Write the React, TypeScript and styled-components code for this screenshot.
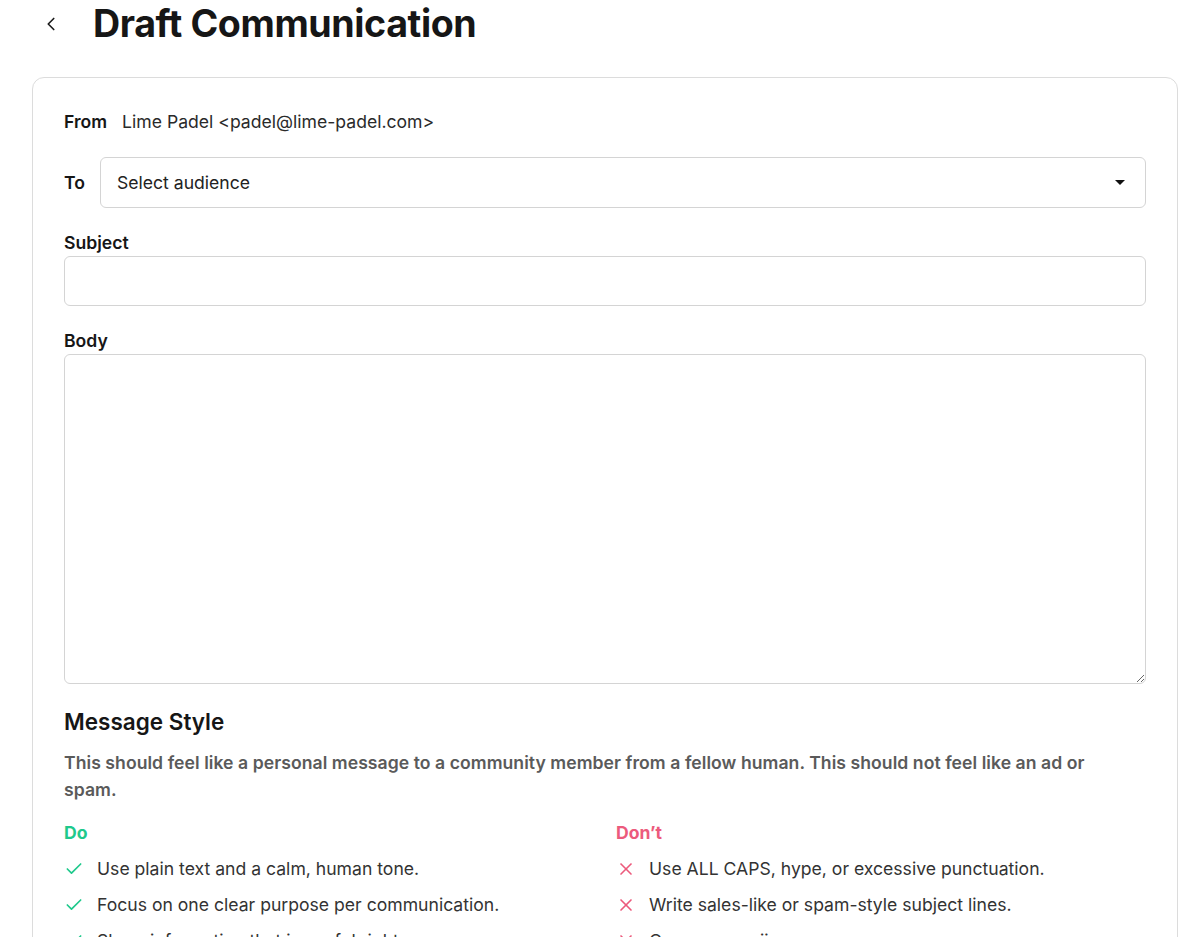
import React from 'react';
import styled, { createGlobalStyle } from 'styled-components';
import { ChevronLeft, Check, X } from 'lucide-react';

const GlobalStyle = createGlobalStyle`
  html, body {
    margin: 0;
    padding: 0;
    background: #fff;
    font-family: Inter, "Noto Sans", "Liberation Sans", sans-serif;
    color: #1a1a1a;
  }
  * { box-sizing: border-box; }
`;

const Page = styled.div`
  padding: 0 22px 40px 32px;
`;

const Header = styled.div`
  display: flex;
  align-items: center;
  height: 47px;
  margin-bottom: 30px;
  padding-left: 8px;
`;

const BackButton = styled.button`
  border: none;
  background: none;
  padding: 0;
  display: flex;
  align-items: center;
  color: #1a1a1a;
  width: 53px;
  cursor: pointer;
`;

const Title = styled.h1`
  margin: 0;
  font-size: 37.6px;
  font-weight: 700;
  letter-spacing: -0.4px;
  color: #161616;
`;

const Card = styled.div`
  border: 1px solid #dcdcdc;
  border-radius: 12px;
  padding: 33px 31px 40px 31px;
`;

const FromRow = styled.div`
  display: flex;
  align-items: center;
  gap: 15px;
  font-size: 17.6px;
  margin-bottom: 25px;
`;

const Label = styled.span`
  font-weight: 600;
  font-size: 17.6px;
  color: #161616;
`;

const FromValue = styled.span`
  color: #2a2a2a;
`;

const ToRow = styled.div`
  display: flex;
  align-items: center;
  gap: 15px;
  margin-bottom: 24px;
`;

const SelectBox = styled.div`
  flex: 1;
  height: 51px;
  border: 1px solid #d4d4d4;
  border-radius: 6px;
  display: flex;
  align-items: center;
  justify-content: space-between;
  padding: 0 20px 0 16px;
  font-size: 17.6px;
  color: #222;
`;

const Caret = styled.span`
  width: 0;
  height: 0;
  border-left: 5px solid transparent;
  border-right: 5px solid transparent;
  border-top: 5px solid #111;
`;

const Field = styled.div`
  display: flex;
  flex-direction: column;
  gap: 3px;
  margin-bottom: 24px;
`;

const TextInput = styled.input`
  height: 50px;
  border: 1px solid #d4d4d4;
  border-radius: 6px;
  font: inherit;
  font-size: 17.6px;
  padding: 0 16px;
  outline: none;
`;

const TextArea = styled.textarea`
  height: 330px;
  border: 1px solid #d4d4d4;
  border-radius: 6px;
  font: inherit;
  font-size: 17.6px;
  padding: 12px 16px;
  outline: none;
  resize: vertical;
`;

const SectionTitle = styled.h2`
  margin: 0 0 14px;
  font-size: 22.5px;
  font-weight: 600;
  color: #161616;
`;

const Intro = styled.p`
  margin: 0 0 19px;
  padding-right: 40px;
  font-size: 17.6px;
  font-weight: 600;
  line-height: 27px;
  letter-spacing: 0.05px;
  color: #5a5a5a;
`;

const Columns = styled.div`
  display: grid;
  grid-template-columns: 1fr 1fr;
  gap: 22px;
`;

const ColumnTitle = styled.div<{ $tone: 'do' | 'dont' }>`
  font-size: 17.6px;
  font-weight: 700;
  color: ${p => (p.$tone === 'do' ? '#1fc98c' : '#ec5a7c')};
  margin-bottom: 14px;
`;

const List = styled.ul`
  list-style: none;
  margin: 0;
  padding: 0;
  display: flex;
  flex-direction: column;
  gap: 12px;
`;

const Item = styled.li`
  display: flex;
  align-items: center;
  gap: 13px;
  font-size: 17.6px;
  line-height: 24px;
  color: #333;
`;

const doItems = [
  'Use plain text and a calm, human tone.',
  'Focus on one clear purpose per communication.',
  'Share information that is useful right now.',
];

const dontItems = [
  'Use ALL CAPS, hype, or excessive punctuation.',
  'Write sales-like or spam-style subject lines.',
  'Overuse emojis.',
];

export default function App() {
  return (
    <Page>
      <GlobalStyle />
      <Header>
        <BackButton aria-label="Back">
          <ChevronLeft size={22} strokeWidth={1.8} />
        </BackButton>
        <Title>Draft Communication</Title>
      </Header>
      <Card>
        <FromRow>
          <Label>From</Label>
          <FromValue>Lime Padel &lt;padel@lime-padel.com&gt;</FromValue>
        </FromRow>
        <ToRow>
          <Label>To</Label>
          <SelectBox>
            Select audience
            <Caret />
          </SelectBox>
        </ToRow>
        <Field>
          <Label>Subject</Label>
          <TextInput />
        </Field>
        <Field>
          <Label>Body</Label>
          <TextArea />
        </Field>
        <SectionTitle>Message Style</SectionTitle>
        <Intro>
          This should feel like a personal message to a community member from a fellow human. This should not feel like an ad or spam.
        </Intro>
        <Columns>
          <div>
            <ColumnTitle $tone="do">Do</ColumnTitle>
            <List>
              {doItems.map(t => (
                <Item key={t}>
                  <Check size={20} color="#1fc98c" strokeWidth={2} />
                  {t}
                </Item>
              ))}
            </List>
          </div>
          <div>
            <ColumnTitle $tone="dont">Don’t</ColumnTitle>
            <List>
              {dontItems.map(t => (
                <Item key={t}>
                  <X size={20} color="#ec5a7c" strokeWidth={2} />
                  {t}
                </Item>
              ))}
            </List>
          </div>
        </Columns>
      </Card>
    </Page>
  );
}
